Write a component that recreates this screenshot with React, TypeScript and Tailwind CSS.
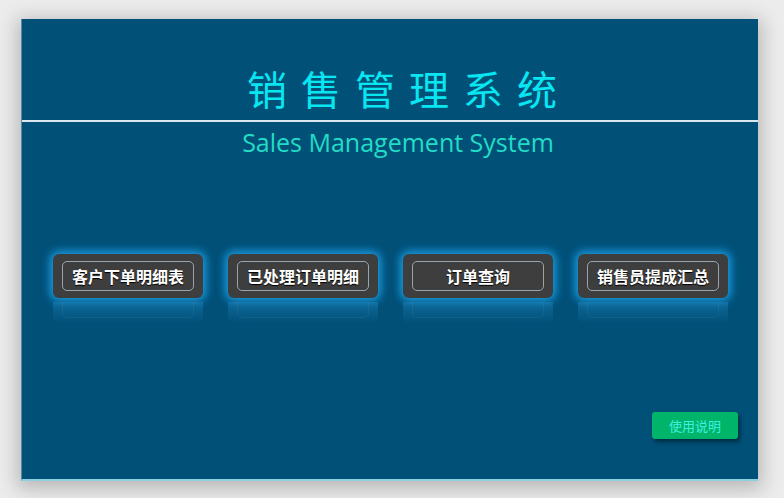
const menus = ["客户下单明细表", "已处理订单明细", "订单查询", "销售员提成汇总"];

const cjk = "font-['Noto_Sans_CJK_SC','Noto_Sans',sans-serif]";

const MenuButton = ({ label }: { label: string }) => (
  <div className="h-[44px] w-[150px] rounded-[6px] bg-[#3e3e3e] p-[7px_9px] shadow-[0_0_9px_3px_#1b9ce0]">
    <div
      className={`flex h-full items-center justify-center rounded-[5px] border border-[#9aa4ac] text-[16px] font-bold leading-none text-white [text-shadow:0_1px_1px_#000] ${cjk}`}
    >
      {label}
    </div>
  </div>
);

// faint mirrored glow under each button
const Reflection = () => (
  <div className="mt-[4px] h-[22px] w-[150px] rounded-b-[6px] bg-[linear-gradient(to_bottom,rgba(40,150,210,0.35),rgba(0,80,120,0))] px-[9px] pb-[6px]">
    <div className="h-full rounded-b-[5px] border-x border-b border-[#9aa4ac]/10" />
  </div>
);

export default function App() {
  return (
    <div className="h-[498px] w-[784px] bg-[#ececec] pl-[21px] pt-[19px]">
      <div className="flex h-[462px] w-[737px] flex-col border-b-2 border-l border-b-[#8fd0e0] border-l-[#5a8aa8] bg-[#005078] shadow-[0_4px_18px_4px_rgba(0,0,0,0.22)]">
        <h1
          className={`mt-[48px] pl-[38px] text-center text-[40px] font-normal leading-[42px] tracking-[14px] text-[#08e6f2] ${cjk}`}
        >
          销售管理系统
        </h1>
        <div className="mt-[11px] h-[2px] w-full bg-[#dce8ee]" />
        <p className="mt-[4px] pl-[16px] text-center font-['Open_Sans',sans-serif] text-[25px] leading-[32px] text-[#22dcc6]">
          Sales Management System
        </p>

        <div className="mt-[96px] flex gap-[25px] pl-[31px]">
          {menus.map((m) => (
            <div key={m} className="flex flex-col">
              <MenuButton label={m} />
              <Reflection />
            </div>
          ))}
        </div>

        <div className="mt-auto mb-[40px] flex justify-end pr-[20px]">
          <button
            className={`h-[27px] w-[86px] rounded-[3px] bg-[#00b56a] text-[13px] leading-none text-[#3ff0e0] shadow-[2px_3px_4px_rgba(0,0,0,0.45)] ${cjk}`}
          >
            使用说明
          </button>
        </div>
      </div>
    </div>
  );
}
